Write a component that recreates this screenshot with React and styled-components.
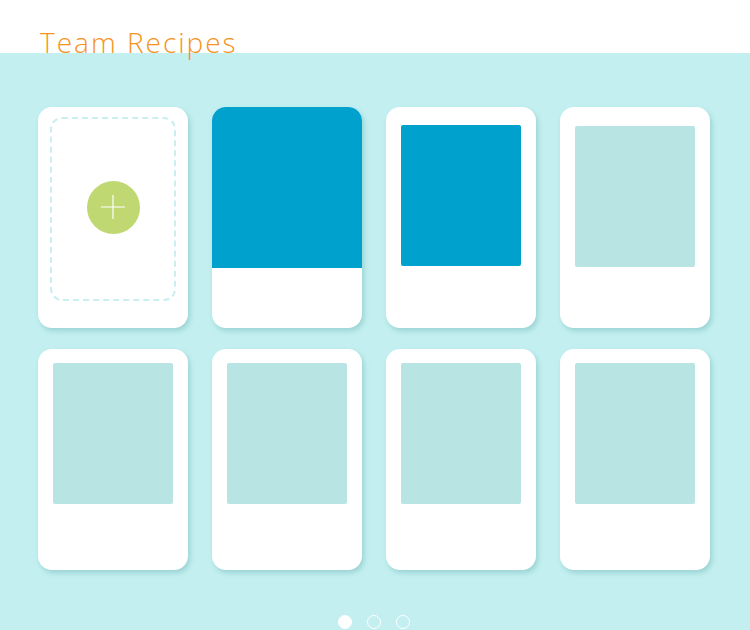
import React from 'react';
import styled, { createGlobalStyle } from 'styled-components';

const GlobalStyle = createGlobalStyle`
  html, body {
    margin: 0;
    padding: 0;
    background: #ffffff;
  }
  body {
    font-family: "Open Sans", "Lato", sans-serif;
  }
`

const Page = styled.div`
  width: 750px;
  height: 630px;
  display: flex;
  flex-direction: column;
  overflow: hidden;
`

const Header = styled.div`
  height: 53px;
  position: relative;
  flex-shrink: 0;
`

const Title = styled.h1`
  position: absolute;
  left: 40px;
  top: 23px;
  margin: 0;
  font-family: "Open Sans", sans-serif;
  font-weight: 300;
  font-size: 28px;
  letter-spacing: 2px;
  color: #f7931e;
  z-index: 2;
`

const Board = styled.div`
  flex: 1;
  background: #c3eff0;
  display: flex;
  flex-direction: column;
  align-items: flex-start;
  padding: 54px 0 0 38px;
`

const Grid = styled.div`
  display: grid;
  grid-template-columns: repeat(4, 150px);
  grid-auto-rows: 221px;
  column-gap: 24px;
  row-gap: 21px;
`

const Card = styled.div`
  background: #ffffff;
  border-radius: 14px;
  box-shadow: 2px 3px 5px rgba(80, 160, 160, 0.35);
  overflow: hidden;
  display: flex;
  flex-direction: column;
  align-items: center;
  padding: ${p => (p.$bleed ? '0' : `${p.$top || 14}px 0 0`)};
  box-sizing: border-box;
`

const Photo = styled.div`
  width: ${p => (p.$bleed ? '100%' : '120px')};
  height: ${p => (p.$bleed ? '161px' : '141px')};
  background: ${p => (p.$blue ? '#00a1cd' : '#b8e4e3')};
  border-radius: ${p => (p.$bleed ? '0' : '2px')};
`

const AddSlot = styled.div`
  width: 122px;
  height: 180px;
  margin-top: -2px;
  border: 2px dashed #cbeeee;
  border-radius: 12px;
  display: flex;
  align-items: center;
  justify-content: center;
`

const AddButton = styled.div`
  width: 53px;
  height: 53px;
  border-radius: 50%;
  background: #bfd872;
  display: flex;
  align-items: center;
  justify-content: center;
  margin-top: -4px;
`

const Dots = styled.div`
  margin-top: 45px;
  align-self: stretch;
  margin-left: -38px;
  display: flex;
  justify-content: center;
  gap: 15px;
  padding-right: 3px;
`

const Dot = styled.span`
  width: 14px;
  height: 14px;
  border-radius: 50%;
  box-sizing: border-box;
  background: ${p => (p.$active ? '#ffffff' : 'transparent')};
  border: 1.5px solid #ffffff;
`

function App() {
    return (
        <Page>
            <GlobalStyle/>
            <Header>
                <Title>Team Recipes</Title>
            </Header>
            <Board>
                <Grid>
                    <Card $top={12}>
                        <AddSlot>
                            <AddButton>
                                <svg width="26" height="26" viewBox="0 0 26 26">
                                    <path d="M13 1v24M1 13h24" stroke="#ffffff" strokeWidth="1.2" fill="none"/>
                                </svg>
                            </AddButton>
                        </AddSlot>
                    </Card>
                    <Card $bleed>
                        <Photo $bleed $blue/>
                    </Card>
                    <Card $top={18}>
                        <Photo $blue/>
                    </Card>
                    <Card $top={19}>
                        <Photo/>
                    </Card>
                    <Card><Photo/></Card>
                    <Card><Photo/></Card>
                    <Card><Photo/></Card>
                    <Card><Photo/></Card>
                </Grid>
                <Dots>
                    <Dot $active/>
                    <Dot/>
                    <Dot/>
                </Dots>
            </Board>
        </Page>
    )
}

export default App;
